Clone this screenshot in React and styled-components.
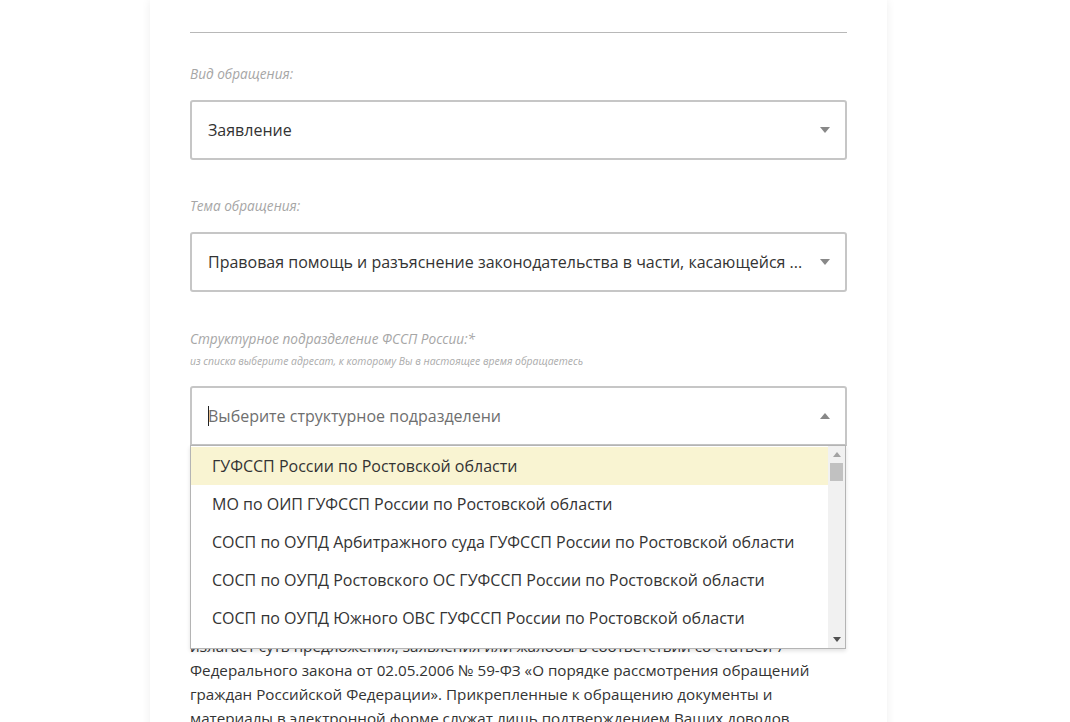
import React from "react";
import styled, { createGlobalStyle } from "styled-components";

const Global = createGlobalStyle`
  html, body { margin: 0; padding: 0; background: #ffffff; }
  body { font-family: "Open Sans", "Noto Sans", sans-serif; color: #333; overflow: hidden; }
  * { box-sizing: border-box; }
`;

const Page = styled.div`
  width: 1070px;
  height: 722px;
  overflow: hidden;
  background: #fff;
`;

const Card = styled.div`
  margin-left: 150px;
  width: 737px;
  min-height: 760px;
  background: #fff;
  box-shadow: 0 0 9px rgba(0, 0, 0, 0.07);
  padding: 32px 40px 0 40px;
`;

const Divider = styled.div`
  height: 1px;
  background: #b8b8b8;
`;

const Field = styled.div`
  margin-top: ${(p) => p.$top}px;
  position: relative;
`;

const Label = styled.div`
  font-family: "Open Sans", sans-serif;
  font-style: italic;
  font-size: 13.6px;
  line-height: 18px;
  color: #a6a6a6;
`;

const Hint = styled.div`
  font-family: "Open Sans", sans-serif;
  font-style: italic;
  font-size: 10.4px;
  line-height: 14px;
  color: #ababab;
  margin-top: 6px;
`;

const SelectBox = styled.div`
  margin-top: ${(p) => p.$top}px;
  height: 60px;
  border: 2px solid #c6c6c6;
  border-radius: ${(p) => (p.$open ? "3px 3px 0 0" : "3px")};
  display: flex;
  align-items: center;
  padding: 0 15px 0 16px;
  gap: 16px;
  background: #fff;
`;

const Value = styled.div`
  flex: 1;
  min-width: 0;
  font-size: 16px;
  color: ${(p) => (p.$placeholder ? "#6f6f6f" : "#333")};
  white-space: nowrap;
  overflow: hidden;
  display: flex;
  align-items: center;
`;

const TextCursor = styled.span`
  display: inline-block;
  width: 1px;
  height: 20px;
  background: #222;
  margin-right: -1px;
`;

const Caret = ({ up }) => (
  <svg width="10" height="6" viewBox="0 0 10 6" style={{ flex: "none" }}>
    {up ? <path d="M0 6 L5 0 L10 6 Z" fill="#888" /> : <path d="M0 0 L10 0 L5 6 Z" fill="#888" />}
  </svg>
);

const Dropdown = styled.div`
  position: absolute;
  left: 0;
  right: 1px;
  top: 100%;
  margin-top: -1px;
  height: 204px;
  border: 1px solid #b4b4b4;
  background: #fff;
  box-shadow: 0 2px 4px rgba(0, 0, 0, 0.12);
  display: flex;
  z-index: 5;
`;

const Options = styled.div`
  flex: 1;
  overflow: hidden;
  padding-top: 1px;
`;

const Option = styled.div`
  height: 38px;
  display: flex;
  align-items: center;
  padding-left: 21px;
  font-family: "Open Sans", sans-serif;
  font-stretch: 94%;
  font-size: 16px;
  color: #333;
  white-space: nowrap;
  background: ${(p) => (p.$active ? "#f9f4d2" : "#fff")};
`;

const Scrollbar = styled.div`
  width: 17px;
  background: #f1f1f1;
  display: flex;
  flex-direction: column;
  align-items: center;
`;

const ScrollBtn = styled.div`
  height: 17px;
  width: 17px;
  display: flex;
  align-items: center;
  justify-content: center;
`;

const Thumb = styled.div`
  width: 13px;
  height: 18px;
  background: #c1c1c1;
`;

const Track = styled.div`
  flex: 1;
  width: 100%;
`;

const Body = styled.p`
  margin: 20px 0 0 0;
  font-family: "Open Sans", sans-serif;
  font-stretch: 94%;
  font-size: 15.2px;
  line-height: 24px;
  color: #333;
  white-space: nowrap;
`;

const options = [
  "ГУФССП России по Ростовской области",
  "МО по ОИП ГУФССП России по Ростовской области",
  "СОСП по ОУПД Арбитражного суда ГУФССП России по Ростовской области",
  "СОСП по ОУПД Ростовского ОС ГУФССП России по Ростовской области",
  "СОСП по ОУПД Южного ОВС ГУФССП России по Ростовской области",
  "Азовский РОСП ГУФССП России по Ростовской области",
];

const bodyLines = [
  "Обращение в форме электронного документа должно содержать",
  "фамилию, имя, отчество (последнее — при наличии) гражданина,",
  "адрес электронной почты, по которому должны быть направлены",
  "ответ, уведомление о переадресации обращения. Гражданин",
  "вправе приложить к такому обращению необходимые документы",
  "и материалы в электронной форме. В обращении гражданин",
  "в обязательном порядке",
  "излагает суть предложения, заявления или жалобы в соответствии со статьей 7",
  "Федерального закона от 02.05.2006 № 59-ФЗ «О порядке рассмотрения обращений",
  "граждан Российской Федерации». Прикрепленные к обращению документы и",
  "материалы в электронной форме служат лишь подтверждением Ваших доводов.",
];

export default function App() {
  return (
    <Page>
      <Global />
      <Card>
        <Divider />
        <Field $top={32}>
          <Label>Вид обращения:</Label>
          <SelectBox $top={17}>
            <Value>Заявление</Value>
            <Caret />
          </SelectBox>
        </Field>
        <Field $top={37}>
          <Label>Тема обращения:</Label>
          <SelectBox $top={17}>
            <Value>Правовая помощь и разъяснение законодательства в части, касающейся ...</Value>
            <Caret />
          </SelectBox>
        </Field>
        <Field $top={38}>
          <Label>Структурное подразделение ФССП России:*</Label>
          <Hint>из списка выберите адресат, к которому Вы в настоящее время обращаетесь</Hint>
          <SelectBox $top={18} $open>
            <Value $placeholder>
              <TextCursor />
              Выберите структурное подразделени
            </Value>
            <Caret up />
          </SelectBox>
          <Dropdown>
            <Options>
              {options.map((o, i) => (
                <Option key={o} $active={i === 0}>
                  {o}
                </Option>
              ))}
            </Options>
            <Scrollbar>
              <ScrollBtn>
                <svg width="8" height="5" viewBox="0 0 8 5">
                  <path d="M0 5 L4 0 L8 5 Z" fill="#a3a3a3" />
                </svg>
              </ScrollBtn>
              <Thumb />
              <Track />
              <ScrollBtn>
                <svg width="8" height="5" viewBox="0 0 8 5">
                  <path d="M0 0 L8 0 L4 5 Z" fill="#505050" />
                </svg>
              </ScrollBtn>
            </Scrollbar>
          </Dropdown>
        </Field>
        <Body>
          {bodyLines.map((l, i) => (
            <React.Fragment key={i}>
              {l}
              {i < bodyLines.length - 1 && <br />}
            </React.Fragment>
          ))}
        </Body>
      </Card>
    </Page>
  );
}
